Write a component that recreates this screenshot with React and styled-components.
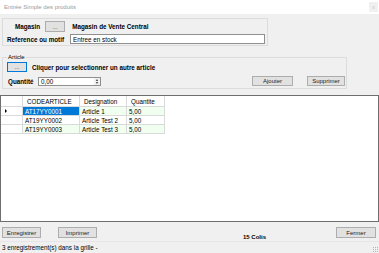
import styled, { createGlobalStyle } from 'styled-components'

const GlobalStyle = createGlobalStyle`
  html, body {
    margin: 0;
    padding: 0;
  }
  body {
    font-family: "Liberation Sans", Arial, sans-serif;
    font-size: 6.3px;
    color: #000;
  }
`

//////////
// Window
const Window = styled.div`
  width: 379px;
  height: 253px;
  background: #f0f0f0;
  display: flex;
  flex-direction: column;
  overflow: hidden;
`

const TitleBar = styled.div`
  height: 14px;
  flex: none;
  background: #fff;
  display: flex;
  align-items: center;
  justify-content: space-between;
  padding-left: 4px;
  color: #9a9a9a;
  font-size: 6px;
`

const CloseBox = styled.div`
  width: 9px;
  height: 10px;
  margin-right: 1px;
  background: #f0f0f0;
  color: #c4c4c4;
  font-size: 5px;
  display: flex;
  align-items: center;
  justify-content: center;
`

//////////
// Groups
const MagasinGroup = styled.div`
  margin: 4px 0 0 2px;
  width: 266px;
  height: 28px;
  box-sizing: border-box;
  border: 1px solid #dcdcdc;
  padding-top: 2px;
  display: flex;
  flex-direction: column;
  gap: 2px;
`

const ArticleGroup = styled.fieldset`
  margin: 8px 0 0 2px;
  width: 345px;
  height: 35px;
  box-sizing: border-box;
  border: 1px solid #dcdcdc;
  padding: 0;
  min-width: 0;
`

const Legend = styled.legend`
  margin-left: 4px;
  padding: 0 1px;
  font-size: 6px;
  line-height: 7px;
`

const Row = styled.div`
  display: flex;
  align-items: center;
  height: ${(props) => props.h}px;
  margin-top: ${(props) => props.mt || 0}px;
`

const Label = styled.div`
  font-weight: ${(props) => (props.bold ? 700 : 400)};
  margin-left: ${(props) => props.ml || 0}px;
  width: ${(props) => (props.w ? props.w + 'px' : 'auto')};
  white-space: nowrap;
  flex: none;
`

const Button = styled.div`
  width: ${(props) => props.w}px;
  height: ${(props) => props.h || 10}px;
  margin-left: ${(props) => props.ml || 0}px;
  box-sizing: border-box;
  background: #e1e1e1;
  border: 1px solid ${(props) => (props.focus ? '#0078d7' : '#adadad')};
  color: #222;
  font-size: 6px;
  display: flex;
  align-items: center;
  justify-content: center;
  flex: none;
`

const TextBox = styled.div`
  width: ${(props) => props.w}px;
  height: ${(props) => props.h}px;
  box-sizing: border-box;
  background: #fff;
  border: 1px solid #8f8f8f;
  padding-left: 2px;
  display: flex;
  align-items: center;
  flex: none;
  position: relative;
`

const Spin = styled.div`
  margin-left: auto;
  width: 6px;
  height: 100%;
  background: #f0f0f0;
  display: flex;
  flex-direction: column;
  align-items: center;
  justify-content: center;
  gap: 1px;
`

const Arrow = styled.div`
  width: 0;
  height: 0;
  border-left: 1.5px solid transparent;
  border-right: 1.5px solid transparent;
  ${(props) => (props.down ? 'border-top: 2px solid #333;' : 'border-bottom: 2px solid #333;')}
`

const RightButtons = styled.div`
  margin-left: auto;
  margin-right: 1px;
  display: flex;
  gap: 14px;
  align-self: flex-end;
`

//////////
// Grid
const GridBox = styled.div`
  margin-top: 6px;
  width: 379px;
  height: 127px;
  box-sizing: border-box;
  border: 1px solid #6f6f6f;
  background: #fff;
  flex: none;
`

const GridTable = styled.div`
  display: grid;
  grid-template-columns: 22px 57px 47px 38px;
  grid-auto-rows: 9px;
  grid-template-rows: 11px;
  width: 164px;
`

const Cell = styled.div`
  border-right: 1px solid #dadada;
  border-bottom: 1px solid #dadada;
  background: ${(props) => (props.sel ? '#0078d7' : props.green ? '#f0fff0' : '#fff')};
  color: ${(props) => (props.sel ? '#fff' : '#000')};
  padding-left: ${(props) => (props.head ? 4 : 2)}px;
  display: flex;
  align-items: center;
  white-space: nowrap;
  overflow: hidden;
`

const RowArrow = styled.div`
  margin-left: 2px;
  width: 0;
  height: 0;
  border-top: 2px solid transparent;
  border-bottom: 2px solid transparent;
  border-left: 2.5px solid #000;
`

//////////
// Bottom
const BottomBar = styled.div`
  height: 19px;
  flex: none;
  display: flex;
  align-items: center;
  padding: 2px 2px 0 2px;
  box-sizing: border-box;
`

const Total = styled.div`
  margin-left: 146px;
  font-weight: 700;
  font-size: 6px;
  align-self: flex-end;
  margin-bottom: 1px;
`

const StatusBar = styled.div`
  flex: 1;
  border-top: 1px solid #e6e6e6;
  display: flex;
  align-items: center;
  justify-content: space-between;
  padding: 0 1px 0 2px;
`

const Grip = styled.div`
  align-self: flex-end;
  display: grid;
  grid-template-columns: repeat(3, 1px);
  gap: 1px;
  margin-bottom: 1px;
  & span {
    width: 1px;
    height: 1px;
    background: #b5b5b5;
  }
`

const rows = [
  { code: 'AT17YY0001', des: 'Article 1', qte: '5,00' },
  { code: 'AT19YY0002', des: 'Article  Test 2', qte: '5,00' },
  { code: 'AT19YY0003', des: 'Article Test 3', qte: '5,00' },
]

function App() {
  return (
    <Window>
      <GlobalStyle />
      <TitleBar>
        Entrée Simple des produits
        <CloseBox>x</CloseBox>
      </TitleBar>

      <MagasinGroup>
        <Row h={11}>
          <Label bold ml={12}>Magasin</Label>
          <Button w={20} h={11} ml={5}>...</Button>
          <Label bold ml={7}>Magasin de Vente Central</Label>
        </Row>
        <Row h={10}>
          <Label bold ml={4} w={63}>Reference ou motif</Label>
          <TextBox w={195} h={10}>Entree en stock</TextBox>
        </Row>
      </MagasinGroup>

      <ArticleGroup>
        <Legend>Article</Legend>
        <Row h={10} mt={1}>
          <Button w={20} ml={4} focus>...</Button>
          <Label bold ml={5}>Cliquer pour selectionner un autre article</Label>
        </Row>
        <Row h={10} mt={4}>
          <Label bold ml={5} w={30}>Quantité</Label>
          <TextBox w={63} h={9}>
            0,00
            <Spin><Arrow /><Arrow down /></Spin>
          </TextBox>
          <RightButtons>
            <Button w={41}>Ajouter</Button>
            <Button w={38}>Supprimer</Button>
          </RightButtons>
        </Row>
      </ArticleGroup>

      <GridBox>
        <GridTable>
          <Cell />
          <Cell head>CODEARTICLE</Cell>
          <Cell head>Designation</Cell>
          <Cell head>Quantite</Cell>
          {rows.map((r, i) => [
            <Cell key={'h' + i}>{i === 0 && <RowArrow />}</Cell>,
            <Cell key={'c' + i} sel={i === 0} green={i % 2 === 0}>{r.code}</Cell>,
            <Cell key={'d' + i} green={i % 2 === 0}>{r.des}</Cell>,
            <Cell key={'q' + i} green={i % 2 === 0}>{r.qte}</Cell>,
          ])}
        </GridTable>
      </GridBox>

      <BottomBar>
        <Button w={39} h={11}>Enregistrer</Button>
        <Button w={39} h={11} ml={17}>Imprimer</Button>
        <Total>15 Colis</Total>
        <Button w={40} h={11} ml={70}>Fermer</Button>
      </BottomBar>

      <StatusBar>
        3 enregistrement(s) dans la grille -
        <Grip>
          <span /><span /><span />
          <span /><span /><span />
          <span /><span /><span />
        </Grip>
      </StatusBar>
    </Window>
  )
}

export default App
